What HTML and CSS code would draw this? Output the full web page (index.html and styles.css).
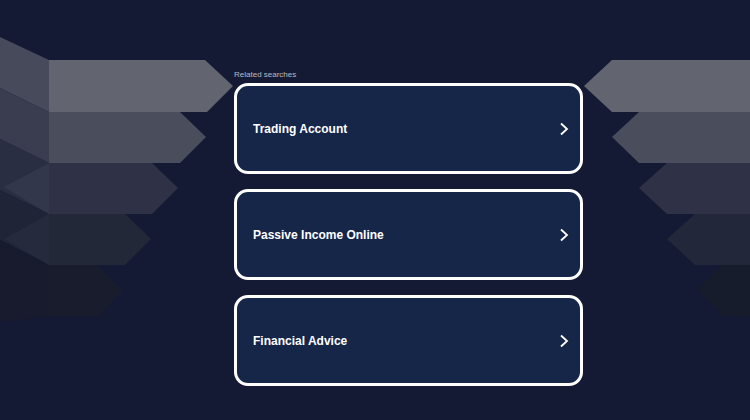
FILE: index.html
```html
<!DOCTYPE html>
<html lang="en">
<head>
<meta charset="utf-8">
<title>Related searches</title>
<link rel="stylesheet" href="styles.css">
</head>
<body>
<div class="page">
  <div class="deco deco-left">
    <svg width="234" height="420" viewBox="0 0 234 420" aria-hidden="true">
      <polygon points="0,37 49,60 49,112 0,88" fill="#474a5b"/>
      <polygon points="0,88 49,112 49,163 0,139" fill="#3a3d4f"/>
      <polygon points="0,139 49,163 49,214 0,190" fill="#2a2e42"/>
      <polygon points="0,190 49,214 49,265 0,240" fill="#202437"/>
      <polygon points="0,240 49,265 49,317 0,322" fill="#171b2d"/>
      <polygon points="49,163 4,187 49,214" fill="#33374b"/>
      <polygon points="49,214 4,239 49,265" fill="#252a3c"/>
      <polygon points="49,60 205,60 233,86 207,112 49,112" fill="#62656f"/>
      <polygon points="49,112 180,112 206,137 180,163 49,163" fill="#4a4d5c"/>
      <polygon points="49,163 152,163 178,188 152,214 49,214" fill="#2f3246"/>
      <polygon points="49,214 125,214 151,239 125,265 49,265" fill="#232839"/>
      <polygon points="49,265 97,265 123,290 100,316 49,316" fill="#181c2d"/>
    </svg>
  </div>
  <main class="center">
    <div class="label">Related searches</div>
    <ul class="list">
      <li class="card"><span class="card-text">Trading Account</span><svg class="chev" width="10" height="14" viewBox="0 0 10 14"><polyline points="2,1.5 8,7 2,12.5" fill="none" stroke="#fff" stroke-width="1.8"/></svg></li>
      <li class="card"><span class="card-text">Passive Income Online</span><svg class="chev" width="10" height="14" viewBox="0 0 10 14"><polyline points="2,1.5 8,7 2,12.5" fill="none" stroke="#fff" stroke-width="1.8"/></svg></li>
      <li class="card"><span class="card-text">Financial Advice</span><svg class="chev" width="10" height="14" viewBox="0 0 10 14"><polyline points="2,1.5 8,7 2,12.5" fill="none" stroke="#fff" stroke-width="1.8"/></svg></li>
    </ul>
  </main>
  <div class="deco deco-right">
    <svg width="167" height="420" viewBox="0 0 167 420" aria-hidden="true">
      <polygon points="1,86 29,60 167,60 167,112 29,112" fill="#62656f"/>
      <polygon points="29,137 56,112 167,112 167,163 56,163" fill="#4a4d5c"/>
      <polygon points="56,188 84,163 167,163 167,214 84,214" fill="#2f3246"/>
      <polygon points="84,239 112,214 167,214 167,265 112,265" fill="#222739"/>
      <polygon points="113,290 140,265 167,265 167,316 140,316" fill="#171c2d"/>
    </svg>
  </div>
</div>
</body>
</html>
```

FILE: styles.css
```css
html, body {
  margin: 0;
  padding: 0;
  background: #141a33;
}
body {
  font-family: "Liberation Sans", Arial, sans-serif;
  width: 750px;
  height: 420px;
  overflow: hidden;
}
.page {
  display: grid;
  grid-template-columns: 234px 349px 1fr;
  height: 420px;
}
.deco svg {
  display: block;
}
.center {
  padding-top: 70px;
}
.label {
  font-size: 8px;
  line-height: 10px;
  color: #b9bac1;
  margin-bottom: 3px;
}
.list {
  list-style: none;
  margin: 0;
  padding: 0;
  display: flex;
  flex-direction: column;
  gap: 15px;
}
.card {
  box-sizing: border-box;
  height: 91px;
  border: 3px solid #ffffff;
  border-radius: 14px;
  background: #162649;
  display: flex;
  align-items: center;
  justify-content: space-between;
  padding: 0 11px 0 16px;
}
.card-text {
  color: #ffffff;
  font-weight: bold;
  font-size: 12px;
}
.chev {
  display: block;
}
```
